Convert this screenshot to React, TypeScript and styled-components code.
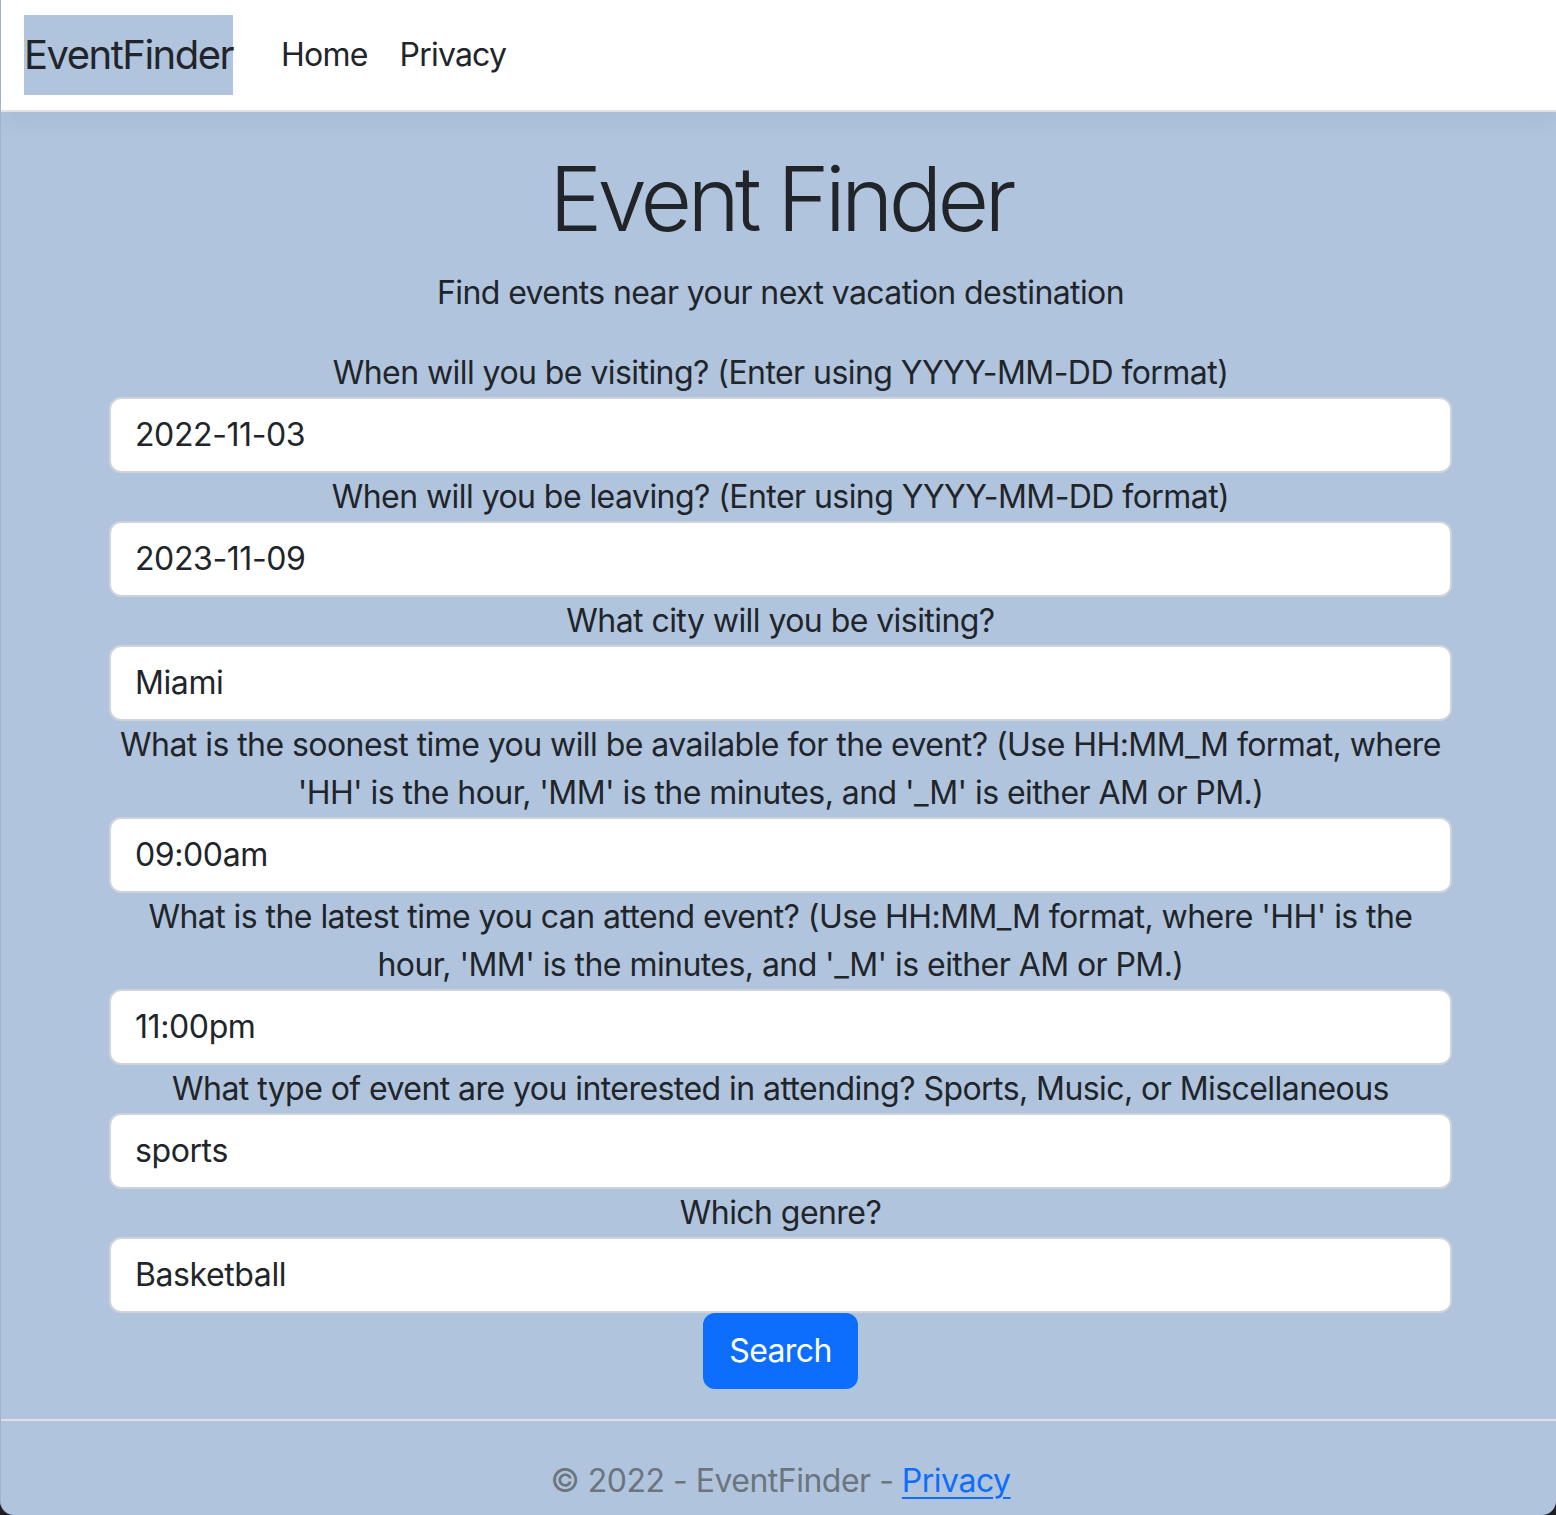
import React from "react";
import styled, { createGlobalStyle } from "styled-components";

const GlobalStyle = createGlobalStyle`
  html, body {
    margin: 0;
    padding: 0;
    background: #1d1d22;
  }
  body {
    font-family: Inter, "Noto Sans", "Liberation Sans", sans-serif;
    color: #212529;
    overflow: hidden;
  }
  * { box-sizing: border-box; }
`;

const Page = styled.div`
  height: 1515px;
  overflow: hidden;
  background: #b0c4de;
  border-bottom-left-radius: 14px;
  border-bottom-right-radius: 14px;
  border-left: 1px solid #a3b3c8;
  display: flex;
  flex-direction: column;
`;

const NavBar = styled.header`
  background: #ffffff;
  height: 112px;
  border-bottom: 2px solid #dee2e6;
  box-shadow: 0 8px 24px rgba(0, 0, 0, 0.05);
  display: flex;
  align-items: center;
  padding: 0 23px;
  flex-shrink: 0;
`;

const Brand = styled.a`
  background: #b0c4de;
  color: #212529;
  font-size: 40px;
  line-height: 60px;
  padding: 10px 0;
  margin-right: 32px;
  text-decoration: none;
  letter-spacing: -1.5px;
`;

const NavLink = styled.a`
  font-size: 32px;
  line-height: 48px;
  padding: 16px 16px;
  color: #212529;
  text-decoration: none;
  letter-spacing: -0.8px;
`;

const Main = styled.main`
  flex: 1;
  padding: 34px 0 30px 4px;
  text-align: center;
`;

const Title = styled.h1`
  font-size: 89px;
  font-weight: 300;
  line-height: 1.2;
  margin: 0 0 16px;
  letter-spacing: -4.7px;
`;

const Lead = styled.p`
  font-size: 32px;
  line-height: 48px;
  margin: 0 0 32px;
  letter-spacing: -0.6px;
`;

const Form = styled.form`
  width: 1343px;
  margin: 0 auto;
  display: flex;
  flex-direction: column;
  align-items: stretch;
`;

const Label = styled.label`
  font-size: 32px;
  line-height: 48px;
  letter-spacing: -0.56px;
  padding: 0 3px;
  display: block;
`;

const Input = styled.input`
  display: block;
  width: 100%;
  height: 76px;
  font-family: inherit;
  font-size: 32px;
  line-height: 48px;
  letter-spacing: -0.4px;
  color: #212529;
  background: #ffffff;
  border: 2px solid #ced4da;
  border-radius: 12px;
  padding: 12px 24px;
  outline: none;
`;

const SearchButton = styled.button`
  align-self: center;
  font-family: inherit;
  font-size: 32px;
  line-height: 48px;
  letter-spacing: -0.6px;
  color: #ffffff;
  background: #0d6efd;
  border: 2px solid #0d6efd;
  border-radius: 12px;
  padding: 12px 24px;
  cursor: pointer;
`;

const Footer = styled.footer`
  border-top: 2px solid #dee2e6;
  line-height: 120px;
  font-size: 32px;
  color: #6c757d;
  text-align: center;
  padding-left: 4px;
  letter-spacing: -0.5px;
  flex-shrink: 0;
  height: 97px;
`;

const FooterLink = styled.a`
  color: #0d6efd;
  text-decoration: underline;
  text-underline-offset: 5px;
  text-decoration-thickness: 2px;
`;

type Field = { label: string; value: string };

const fields: Field[] = [
  { label: "When will you be visiting? (Enter using YYYY-MM-DD format)", value: "2022-11-03" },
  { label: "When will you be leaving? (Enter using YYYY-MM-DD format)", value: "2023-11-09" },
  { label: "What city will you be visiting?", value: "Miami" },
  {
    label:
      "What is the soonest time you will be available for the event? (Use HH:MM_M format, where 'HH' is the hour, 'MM' is the minutes, and '_M' is either AM or PM.)",
    value: "09:00am",
  },
  {
    label:
      "What is the latest time you can attend event? (Use HH:MM_M format, where 'HH' is the hour, 'MM' is the minutes, and '_M' is either AM or PM.)",
    value: "11:00pm",
  },
  {
    label: "What type of event are you interested in attending? Sports, Music, or Miscellaneous",
    value: "sports",
  },
  { label: "Which genre?", value: "Basketball" },
];

export default function App() {
  return (
    <>
      <GlobalStyle />
      <Page>
        <NavBar>
          <Brand href="#">EventFinder</Brand>
          <NavLink href="#">Home</NavLink>
          <NavLink href="#">Privacy</NavLink>
        </NavBar>
        <Main>
          <Title>Event Finder</Title>
          <Lead>Find events near your next vacation destination</Lead>
          <Form onSubmit={(e) => e.preventDefault()}>
            {fields.map((f, i) => (
              <React.Fragment key={i}>
                <Label htmlFor={`f${i}`}>{f.label}</Label>
                <Input id={`f${i}`} defaultValue={f.value} />
              </React.Fragment>
            ))}
            <SearchButton type="submit">Search</SearchButton>
          </Form>
        </Main>
        <Footer>
          © 2022 - EventFinder - <FooterLink href="#">Privacy</FooterLink>
        </Footer>
      </Page>
    </>
  );
}
